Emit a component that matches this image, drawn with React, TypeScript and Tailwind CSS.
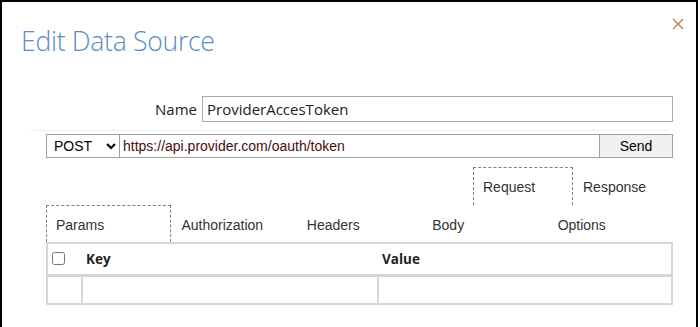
import { useState } from "react";

const tabs = ["Params", "Authorization", "Headers", "Body", "Options"];

function TabRow({ items, active, className }: { items: string[]; active: string; className: string }) {
    return (
        <div className={className}>
            {items.map((t) => (
                <div
                    key={t}
                    className={
                        "flex-1 pl-[9px] pt-[9px] " +
                        (t === active ? "border-t border-l border-r border-dashed border-[#808080]" : "border border-transparent")
                    }
                >
                    {t}
                </div>
            ))}
        </div>
    );
}

const App = () => {
    const [method, setMethod] = useState("POST");

    return (
        <main className="w-[700px] h-[327px] bg-white overflow-hidden">
            <div className="relative w-[698px] h-[340px] border-t-2 border-l-2 border-r-2 border-black font-['Liberation_Sans',Arial,sans-serif]">
                <button className="absolute right-[12px] top-[16px] w-[12px] h-[12px] text-[#c0763a]">
                    <svg viewBox="0 0 12 12" width="12" height="12">
                        <path d="M1 1 L11 11 M11 1 L1 11" stroke="currentColor" strokeWidth="1.2" fill="none" />
                    </svg>
                </button>

                <h1 className="pl-[19px] pt-[22px] text-[26.6px] leading-[34px] font-light text-[#5a8cc5] font-['Open_Sans',sans-serif] tracking-[-0.3px]">
                    Edit Data Source
                </h1>

                <div className="flex items-center justify-end mt-[38px] pr-[23px] font-['Open_Sans',sans-serif] text-[15px] text-[#222]">
                    <label className="mr-[5px]">Name</label>
                    <input
                        defaultValue="ProviderAccesToken"
                        className="w-[471px] h-[26px] border border-[#a8a8a8] px-[4px] text-[15px] text-[#222] outline-none"
                    />
                </div>

                <div className="mx-[28px] mt-[8px] border-t border-[#eeeeee]" />

                <div className="flex ml-[44px] mr-[23px] mt-[3px] h-[24px] text-[14px]">
                    <select
                        value={method}
                        onChange={(e) => setMethod(e.target.value)}
                        className="w-[74px] h-full border border-[#a0a0a0] pl-[3px] text-black bg-white"
                    >
                        <option>POST</option>
                        <option>GET</option>
                    </select>
                    <input
                        defaultValue="https://api.provider.com/oauth/token"
                        className="flex-1 h-full border-t border-b border-[#a0a0a0] px-[3px] text-[#4a0d0d] outline-none"
                    />
                    <button className="w-[74px] h-full border border-[#a0a0a0] bg-[#f0f0f0] text-black">Send</button>
                </div>

                <div className="ml-[44px] mr-[23px] text-[14px] text-[#333]">
                    <TabRow
                        items={["Request", "Response"]}
                        active="Request"
                        className="flex w-[200px] ml-auto h-[38px] mt-[9px]"
                    />
                    <TabRow items={tabs} active="Params" className="flex h-[37px]" />

                    <table className="w-full border-collapse font-['Open_Sans',sans-serif] text-[13.5px]">
                        <thead>
                            <tr className="h-[32px] border-2 border-[#d6d6d6] border-b-[3px]">
                                <th className="w-[35px] pl-[4px] text-left">
                                    <input type="checkbox" className="block w-[13px] h-[13px]" />
                                </th>
                                <th className="w-[296px] pl-[4px] text-left font-bold text-[#222]">Key</th>
                                <th className="pl-[4px] text-left font-bold text-[#222]">Value</th>
                            </tr>
                        </thead>
                        <tbody>
                            <tr className="h-[29px]">
                                <td className="border-2 border-t-0 border-[#d6d6d6]" />
                                <td className="border-2 border-t-0 border-[#d6d6d6]" />
                                <td className="border-2 border-t-0 border-[#d6d6d6]" />
                            </tr>
                        </tbody>
                    </table>
                </div>
            </div>
        </main>
    );
};

export default App;
